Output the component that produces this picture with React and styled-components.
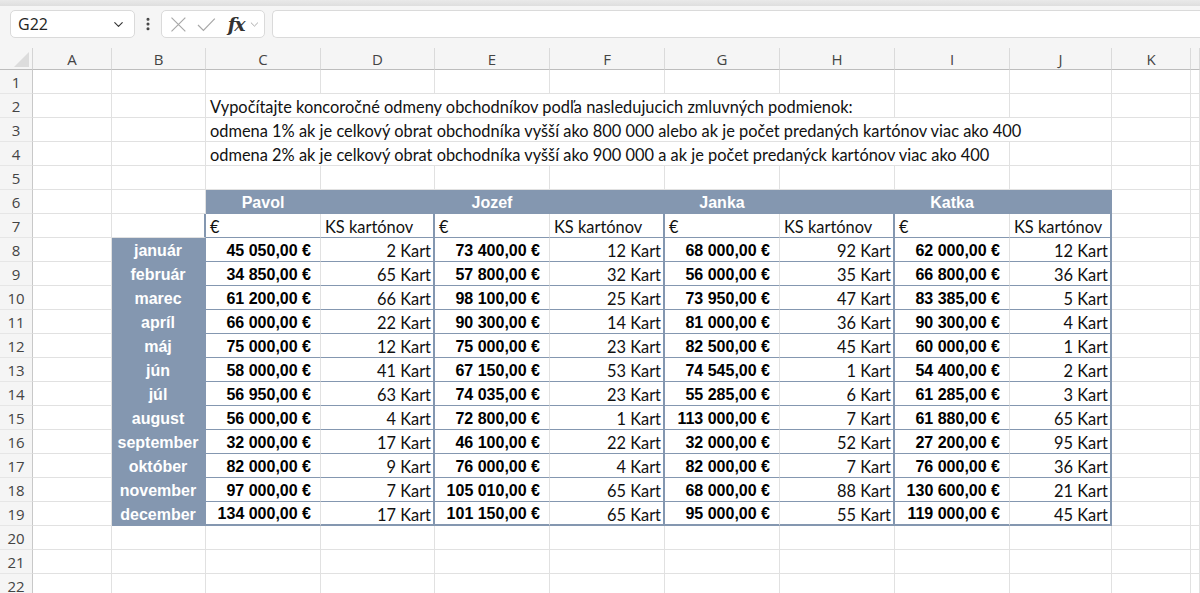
import styled, { createGlobalStyle } from "styled-components";
import { ChevronDown, EllipsisVertical } from "lucide-react";

const BLUE = "#8497b0";
const LINE = "#e1e1e1";
const COLS = ["A", "B", "C", "D", "E", "F", "G", "H", "I", "J", "K", "L"];

const MONTHS = [
  "január", "február", "marec", "apríl", "máj", "jún",
  "júl", "august", "september", "október", "november", "december",
];

// [suma, kartóny] pre každého obchodníka
const SELLERS = [
  {
    name: "Pavol",
    rows: [
      ["45 050,00 €", 2], ["34 850,00 €", 65], ["61 200,00 €", 66], ["66 000,00 €", 22],
      ["75 000,00 €", 12], ["58 000,00 €", 41], ["56 950,00 €", 63], ["56 000,00 €", 4],
      ["32 000,00 €", 17], ["82 000,00 €", 9], ["97 000,00 €", 7], ["134 000,00 €", 17],
    ],
  },
  {
    name: "Jozef",
    rows: [
      ["73 400,00 €", 12], ["57 800,00 €", 32], ["98 100,00 €", 25], ["90 300,00 €", 14],
      ["75 000,00 €", 23], ["67 150,00 €", 53], ["74 035,00 €", 23], ["72 800,00 €", 1],
      ["46 100,00 €", 22], ["76 000,00 €", 4], ["105 010,00 €", 65], ["101 150,00 €", 65],
    ],
  },
  {
    name: "Janka",
    rows: [
      ["68 000,00 €", 92], ["56 000,00 €", 35], ["73 950,00 €", 47], ["81 000,00 €", 36],
      ["82 500,00 €", 45], ["74 545,00 €", 1], ["55 285,00 €", 6], ["113 000,00 €", 7],
      ["32 000,00 €", 52], ["82 000,00 €", 7], ["68 000,00 €", 88], ["95 000,00 €", 55],
    ],
  },
  {
    name: "Katka",
    rows: [
      ["62 000,00 €", 12], ["66 800,00 €", 36], ["83 385,00 €", 5], ["90 300,00 €", 4],
      ["60 000,00 €", 1], ["54 400,00 €", 2], ["61 285,00 €", 3], ["61 880,00 €", 65],
      ["27 200,00 €", 95], ["76 000,00 €", 36], ["130 600,00 €", 21], ["119 000,00 €", 45],
    ],
  },
];

const NOTES = {
  2: { span: 6, text: "Vypočítajte koncoročné odmeny obchodníkov podľa nasledujucich zmluvných podmienok:" },
  3: { span: 8, text: "odmena 1% ak je celkový obrat obchodníka vyšší ako 800 000 alebo ak je počet predaných kartónov viac ako 400" },
  4: { span: 7, text: "odmena 2% ak je celkový obrat obchodníka vyšší ako 900 000 a ak je počet predanýck kartónov viac ako 400" },
};

const GlobalStyle = createGlobalStyle`
  html, body {
    margin: 0;
    padding: 0;
    background: #fff;
    overflow: hidden;
  }
`;

const Window = styled.div`
  width: 1200px;
  height: 593px;
  overflow: hidden;
  display: flex;
  flex-direction: column;
  background: #f5f5f5;
`;

const TopStrip = styled.div`
  height: 6px;
  flex: none;
  background: linear-gradient(#e9e9e9, #dedede);
  box-shadow: 0 1px 3px rgba(0, 0, 0, 0.16);
`;

const FormulaBar = styled.div`
  height: 42px;
  flex: none;
  display: flex;
  align-items: flex-start;
  padding: 4px 0 0 10px;
  box-sizing: border-box;
  background: #f5f5f5;
`;

const Box = styled.div`
  height: 28px;
  box-sizing: border-box;
  display: flex;
  align-items: center;
  background: #fff;
  border: 1px solid #dadada;
  border-radius: 5px;
`;

const NameBox = styled(Box)`
  width: 125px;
  justify-content: space-between;
  padding: 0 8px 0 7px;
  font-family: "Open Sans", sans-serif;
  font-size: 16px;
  color: #222;
`;

const Dots = styled.div`
  width: 26px;
  height: 28px;
  display: flex;
  align-items: center;
  justify-content: center;
  color: #444;
`;

const FxBox = styled(Box)`
  width: 104px;
  padding: 0 3px 0 8px;
  gap: 10px;
`;

const Fx = styled.span`
  font-family: "DejaVu Serif", "Liberation Serif", serif;
  font-style: italic;
  font-weight: 700;
  font-size: 19px;
  line-height: 1;
  color: #333;
  margin-left: 2px;
  margin-right: -6px;
  letter-spacing: -1.5px;
`;

const FormulaInput = styled(Box)`
  flex: 1;
  margin-left: 7px;
  border-right: none;
  border-radius: 5px 0 0 5px;
`;

const Sheet = styled.div`
  flex: 1;
  display: grid;
  grid-template-columns: 33px 79px 94px 115px 114px 115px 115px 115px 115px 115px 102px 79px 1fr;
  grid-template-rows: 22px repeat(22, 24px);
  background: #fff;
`;

const Corner = styled.div`
  box-sizing: border-box;
  display: flex;
  align-items: flex-end;
  justify-content: flex-end;
  padding: 0 3px 2px 0;
  background: #f5f5f5;
  border-right: 1px solid #d4d4d4;
  border-bottom: 1px solid #bdbdbd;

  &::after {
    content: "";
    width: 15px;
    height: 15px;
    background: #dcdcdc;
    clip-path: polygon(100% 0, 100% 100%, 0 100%);
  }
`;

const ColHead = styled.div`
  box-sizing: border-box;
  display: flex;
  align-items: center;
  justify-content: center;
  background: #f5f5f5;
  border-right: 1px solid #dadada;
  border-bottom: 1px solid #bdbdbd;
  font-family: "Open Sans", sans-serif;
  font-size: 15px;
  color: #444;
`;

const RowNum = styled.div`
  box-sizing: border-box;
  display: flex;
  align-items: center;
  justify-content: center;
  padding-top: 1px;
  background: #f5f5f5;
  border-right: 1px solid #c8c8c8;
  border-bottom: 1px solid #e6e6e6;
  font-family: "Open Sans", sans-serif;
  font-size: 15px;
  color: #444;
`;

const GridCell = styled.div`
  box-sizing: border-box;
  min-width: 0;
  display: flex;
  align-items: center;
  padding: 2px 3px 0;
  white-space: nowrap;
  background: #fff;
  border-right: 1px solid ${LINE};
  border-bottom: 1px solid ${LINE};
  font-family: Lato, "Liberation Sans", sans-serif;
  font-size: 16.4px;
  color: #111;
`;

const NoteCell = styled(GridCell)`
  grid-column: span ${(p) => p.$span};
  padding-left: 4px;
`;

const EdgeCell = styled(GridCell)`
  border-right: 2px solid ${BLUE};
`;

const HeadCell = styled(GridCell)`
  justify-content: center;
  background: ${BLUE};
  border-right-color: ${BLUE};
  border-bottom-color: ${BLUE};
  font-family: "Liberation Sans", Arial, sans-serif;
  font-size: 16px;
  font-weight: 700;
  color: #fff;
`;

const SubCell = styled(GridCell)`
  padding-left: 4px;
  border-right: ${(p) => (p.$end ? `2px solid ${BLUE}` : `1px solid ${LINE}`)};
  border-bottom: 1px solid ${BLUE};
`;

const MonthCell = styled(GridCell)`
  justify-content: center;
  background: ${BLUE};
  border-right: 2px solid ${BLUE};
  border-bottom-color: ${BLUE};
  font-family: "Liberation Sans", Arial, sans-serif;
  font-size: 16px;
  font-weight: 700;
  color: #fff;
`;

const AmountCell = styled(GridCell)`
  justify-content: flex-end;
  padding-right: 9px;
  border-bottom: ${(p) => (p.$last ? 2 : 1)}px solid ${BLUE};
  font-family: "Liberation Sans", Arial, sans-serif;
  font-size: 16px;
  font-weight: 700;
  color: #000;
`;

const CountCell = styled(GridCell)`
  justify-content: flex-end;
  padding-right: 2px;
  border-right: 2px solid ${BLUE};
  border-bottom: ${(p) => (p.$last ? 2 : 1)}px solid ${BLUE};
`;

const CancelIcon = () => (
  <svg width="17" height="17" viewBox="0 0 17 17" fill="none" stroke="#a8a8a8" strokeWidth="1.2">
    <path d="M1.5 1.5 L15.5 15.5 M15.5 1.5 L1.5 15.5" />
  </svg>
);

const EnterIcon = () => (
  <svg width="19" height="15" viewBox="0 0 19 15" fill="none" stroke="#a8a8a8" strokeWidth="1.2">
    <path d="M1 8 L6.5 13.5 L18 1.5" />
  </svg>
);

function blanks(row, from, to) {
  const out = [];
  for (let c = from; c < to; c++) out.push(<GridCell key={`${row}-${c}`} />);
  return out;
}

function sheetRow(r) {
  const cells = [<RowNum key={`n${r}`}>{r}</RowNum>];

  if (NOTES[r]) {
    const { span, text } = NOTES[r];
    cells.push(...blanks(r, 0, 2));
    cells.push(<NoteCell key={`${r}-note`} $span={span}>{text}</NoteCell>);
    cells.push(...blanks(r, 2 + span, 12));
  } else if (r === 6) {
    cells.push(...blanks(r, 0, 2));
    SELLERS.forEach((s) => {
      cells.push(<HeadCell key={`${r}-${s.name}`}>{s.name}</HeadCell>);
      cells.push(<HeadCell key={`${r}-${s.name}-b`} />);
    });
    cells.push(...blanks(r, 10, 12));
  } else if (r === 7) {
    cells.push(...blanks(r, 0, 1));
    cells.push(<EdgeCell key={`${r}-edge`} />);
    SELLERS.forEach((s) => {
      cells.push(<SubCell key={`${r}-${s.name}`}>€</SubCell>);
      cells.push(<SubCell key={`${r}-${s.name}-k`} $end>KS kartónov</SubCell>);
    });
    cells.push(...blanks(r, 10, 12));
  } else if (r >= 8 && r <= 19) {
    const i = r - 8;
    const last = r === 19;
    cells.push(...blanks(r, 0, 1));
    cells.push(<MonthCell key={`${r}-m`}>{MONTHS[i]}</MonthCell>);
    SELLERS.forEach((s) => {
      const [sum, count] = s.rows[i];
      cells.push(<AmountCell key={`${r}-${s.name}`} $last={last}>{sum}</AmountCell>);
      cells.push(<CountCell key={`${r}-${s.name}-k`} $last={last}>{count} Kart</CountCell>);
    });
    cells.push(...blanks(r, 10, 12));
  } else {
    cells.push(...blanks(r, 0, 12));
  }
  return cells;
}

export default function App() {
  const rows = [];
  for (let r = 1; r <= 22; r++) rows.push(...sheetRow(r));

  return (
    <>
      <GlobalStyle />
      <Window>
        <TopStrip />
        <FormulaBar>
          <NameBox>
            G22
            <ChevronDown size={15} strokeWidth={1.8} color="#333" />
          </NameBox>
          <Dots>
            <EllipsisVertical size={16} strokeWidth={2.6} />
          </Dots>
          <FxBox>
            <CancelIcon />
            <EnterIcon />
            <Fx>fx</Fx>
            <ChevronDown size={13} strokeWidth={1.3} color="#888" />
          </FxBox>
          <FormulaInput />
        </FormulaBar>
        <Sheet>
          <Corner />
          {COLS.map((c) => (
            <ColHead key={c}>{c === "L" ? "" : c}</ColHead>
          ))}
          {rows}
        </Sheet>
      </Window>
    </>
  );
}
